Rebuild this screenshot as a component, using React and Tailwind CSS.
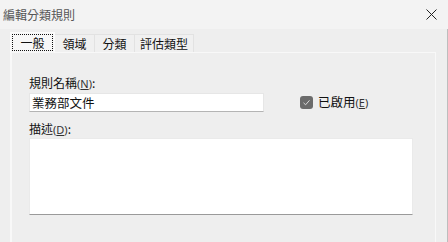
import React from 'react'

const font = { fontFamily: '"Noto Sans CJK TC", "Noto Sans", sans-serif' }

const Mn = ({ k }) => (
  <span className="text-[11px] text-[#333]" style={{ fontFamily: '"Noto Sans", "Liberation Sans", sans-serif' }}>
    (<span className="underline underline-offset-1">{k}</span>)
  </span>
)

const tabs = [
  { label: '領域', w: 'w-[40px]' },
  { label: '分類', w: 'w-[40px]' },
  { label: '評估類型', w: 'w-[59px]' },
]

export default function App() {
  return (
    <div className="w-[448px] h-[242px] bg-[#eeeeee] overflow-hidden flex flex-col" style={font}>
      {/* title bar */}
      <div className="h-[29px] shrink-0 bg-[#f3f3f3] flex items-center justify-between pl-[3px] pr-[11px]">
        <span className="text-[12px] leading-[16px] text-[#555]">編輯分類規則</span>
        <svg width="11" height="11" viewBox="0 0 11 11" className="mt-[0px]">
          <path d="M0.5 0.5 L10.5 10.5 M10.5 0.5 L0.5 10.5" stroke="#222" strokeWidth="1" fill="none" />
        </svg>
      </div>

      <div className="flex-1 flex flex-col pl-[10px] pr-[12px] pt-[3px] border-r border-[#bdbdbd]">
        {/* tabs */}
        <div className="flex items-end h-[21px] text-[12px] text-[#111]">
          <div className="w-[45px] h-[21px] bg-[#f7f7f7] border-l border-t border-r border-[#fbfbfb] flex items-start justify-center pt-[1px] relative z-10">
            <span className="w-[41px] h-[17px] border border-dotted border-[#111] flex items-center justify-center leading-[15px]">一般</span>
          </div>
          {tabs.map((t) => (
            <div key={t.label} className={`${t.w} h-[19px] bg-[#f0f0f0] border-t border-r border-[#e2e2e2] flex items-center justify-center leading-[16px] pb-[1px]`}>
              {t.label}
            </div>
          ))}
        </div>

        {/* panel */}
        <div className="flex-1 w-[426px] -mt-px border-l-2 border-t border-r border-[#f8f8f8] pl-[17px] pt-[22px] text-[12px] text-[#111]">
          <div className="leading-[16px]">
            規則名稱<Mn k="N" />:
          </div>
          <div className="flex items-center mt-[1px]">
            <div className="w-[235px] h-[19px] bg-white border border-[#e6e6e6] border-b-[#b4b4b4] pl-[2px] flex items-center leading-[16px] text-[12.5px]">
              業務部文件
            </div>
            <div className="ml-[36px] w-[13px] h-[13px] rounded-[3px] bg-[#6b6b6b] flex items-center justify-center">
              <svg width="9" height="9" viewBox="0 0 9 9">
                <path d="M1.5 4.8 L3.6 6.8 L7.5 2.3" stroke="#d8d8d8" strokeWidth="1" fill="none" />
              </svg>
            </div>
            <span className="ml-[5px] text-[12.5px] leading-[16px]">
              已啟用<Mn k="E" />
            </span>
          </div>
          <div className="leading-[16px] mt-[9px]">
            描述<Mn k="D" />:
          </div>
          <div className="w-[384px] h-[77px] bg-white border border-[#eaeaea] border-b-[#9a9a9a]" />
        </div>
      </div>
    </div>
  )
}
